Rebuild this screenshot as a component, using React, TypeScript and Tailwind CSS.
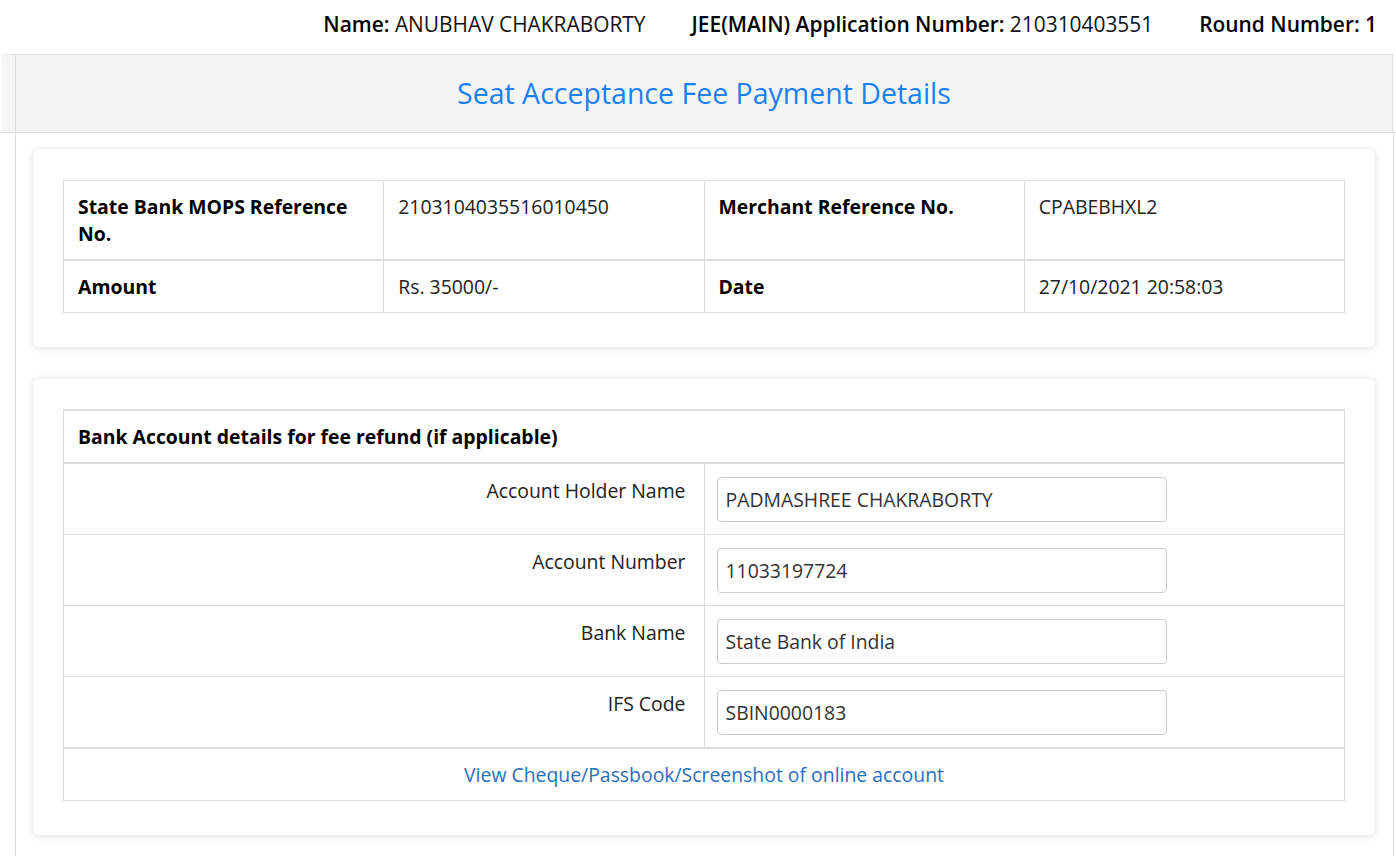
import React from "react";

const font = { fontFamily: '"Open Sans", "Liberation Sans", sans-serif' };

const PaymentRow = ({
  a,
  b,
  c,
  d,
  thick,
}: {
  a: string;
  b: string;
  c: string;
  d: string;
  thick?: boolean;
}) => {
  const cell = `border-x border-[#ddd] ${thick ? "border-b-2" : "border-b"} px-[14px] pt-[12px] pb-[12px] align-top`;
  return (
    <tr>
      <td className={`${cell} font-bold text-black`}>{a}</td>
      <td className={`${cell} text-[#222]`}>{b}</td>
      <td className={`${cell} font-bold text-black`}>{c}</td>
      <td className={`${cell} text-[#222]`}>{d}</td>
    </tr>
  );
};

const fields = [
  { label: "Account Holder Name", value: "PADMASHREE CHAKRABORTY" },
  { label: "Account Number", value: "11033197724" },
  { label: "Bank Name", value: "State Bank of India" },
  { label: "IFS Code", value: "SBIN0000183" },
];

const App = () => {
  return (
    <div className="min-h-screen bg-white text-[19.4px] leading-[27px] text-[#222]" style={font}>
      <div className="h-[54px] flex items-center justify-end gap-[46px] pr-[19px] pb-[6px] text-[20.9px] text-[#111]">
        <div>
          <span className="font-semibold text-black">Name:</span> ANUBHAV CHAKRABORTY
        </div>
        <div>
          <span className="font-semibold text-black">JEE(MAIN) Application Number:</span> 210310403551
        </div>
        <div>
          <span className="font-semibold text-black">Round Number: 1</span>
        </div>
      </div>

      <div className="border-b border-[#ddd]">
        <div className="ml-[2px] mr-[3px] bg-[#f5f5f5] rounded-tl-[5px] border-t border-r border-[#ddd] h-[78px]">
          <div className="ml-[13px] h-full border-l border-[#ddd] flex items-center justify-center text-[28.5px] text-[#1a80f5]">
            Seat Acceptance Fee Payment Details
          </div>
        </div>
      </div>

      <div className="ml-[15px] mr-[2px] border-l border-r border-b border-[#ddd] pl-[17px] pr-[18px] pt-[16px] pb-[21px] flex flex-col gap-[32px]">
        <div className="bg-white rounded-[6px] shadow-[0_1px_7px_rgba(0,0,0,0.16)] px-[30px] pt-[31px] pb-[34px]">
          <table className="w-full table-fixed border-collapse border-t border-[#ddd]">
            <tbody>
              <PaymentRow
                a="State Bank MOPS Reference No."
                b="2103104035516010450"
                c="Merchant Reference No."
                d="CPABEBHXL2"
                thick
              />
              <PaymentRow a="Amount" b="Rs. 35000/-" c="Date" d="27/10/2021 20:58:03" />
            </tbody>
          </table>
        </div>

        <div className="bg-white rounded-[6px] shadow-[0_1px_7px_rgba(0,0,0,0.16)] px-[30px] pt-[30px] pb-[34px]">
          <table className="w-full table-fixed border-collapse border-t-2 border-[#ddd]">
            <thead>
              <tr>
                <th
                  colSpan={2}
                  className="border-x border-b-2 border-[#ddd] px-[14px] py-[12px] text-left font-bold text-black"
                >
                  Bank Account details for fee refund (if applicable)
                </th>
              </tr>
            </thead>
            <tbody>
              {fields.map((f, i) => (
                <tr key={f.label}>
                  <td
                    className={`border-x border-[#ddd] ${i === fields.length - 1 ? "border-b-2" : "border-b"} pr-[18px] pt-[13px] pb-[12px] text-right align-top text-[#222]`}
                  >
                    {f.label}
                  </td>
                  <td
                    className={`border-x border-[#ddd] ${i === fields.length - 1 ? "border-b-2" : "border-b"} pl-[12px] pt-[13px] pb-[12px] align-top`}
                  >
                    <input
                      type="text"
                      readOnly
                      value={f.value}
                      className="w-[450px] h-[45px] border border-[#ccc] rounded-[4px] px-[8px] text-[19.4px] text-[#333] bg-white focus:outline-none"
                      style={font}
                    />
                  </td>
                </tr>
              ))}
              <tr>
                <td colSpan={2} className="border-x border-b border-[#ddd] py-[12px] text-center">
                  <a href="#" className="text-[#2a6ebb]">
                    View Cheque/Passbook/Screenshot of online account
                  </a>
                </td>
              </tr>
            </tbody>
          </table>
        </div>
      </div>
    </div>
  );
};

export default App;
